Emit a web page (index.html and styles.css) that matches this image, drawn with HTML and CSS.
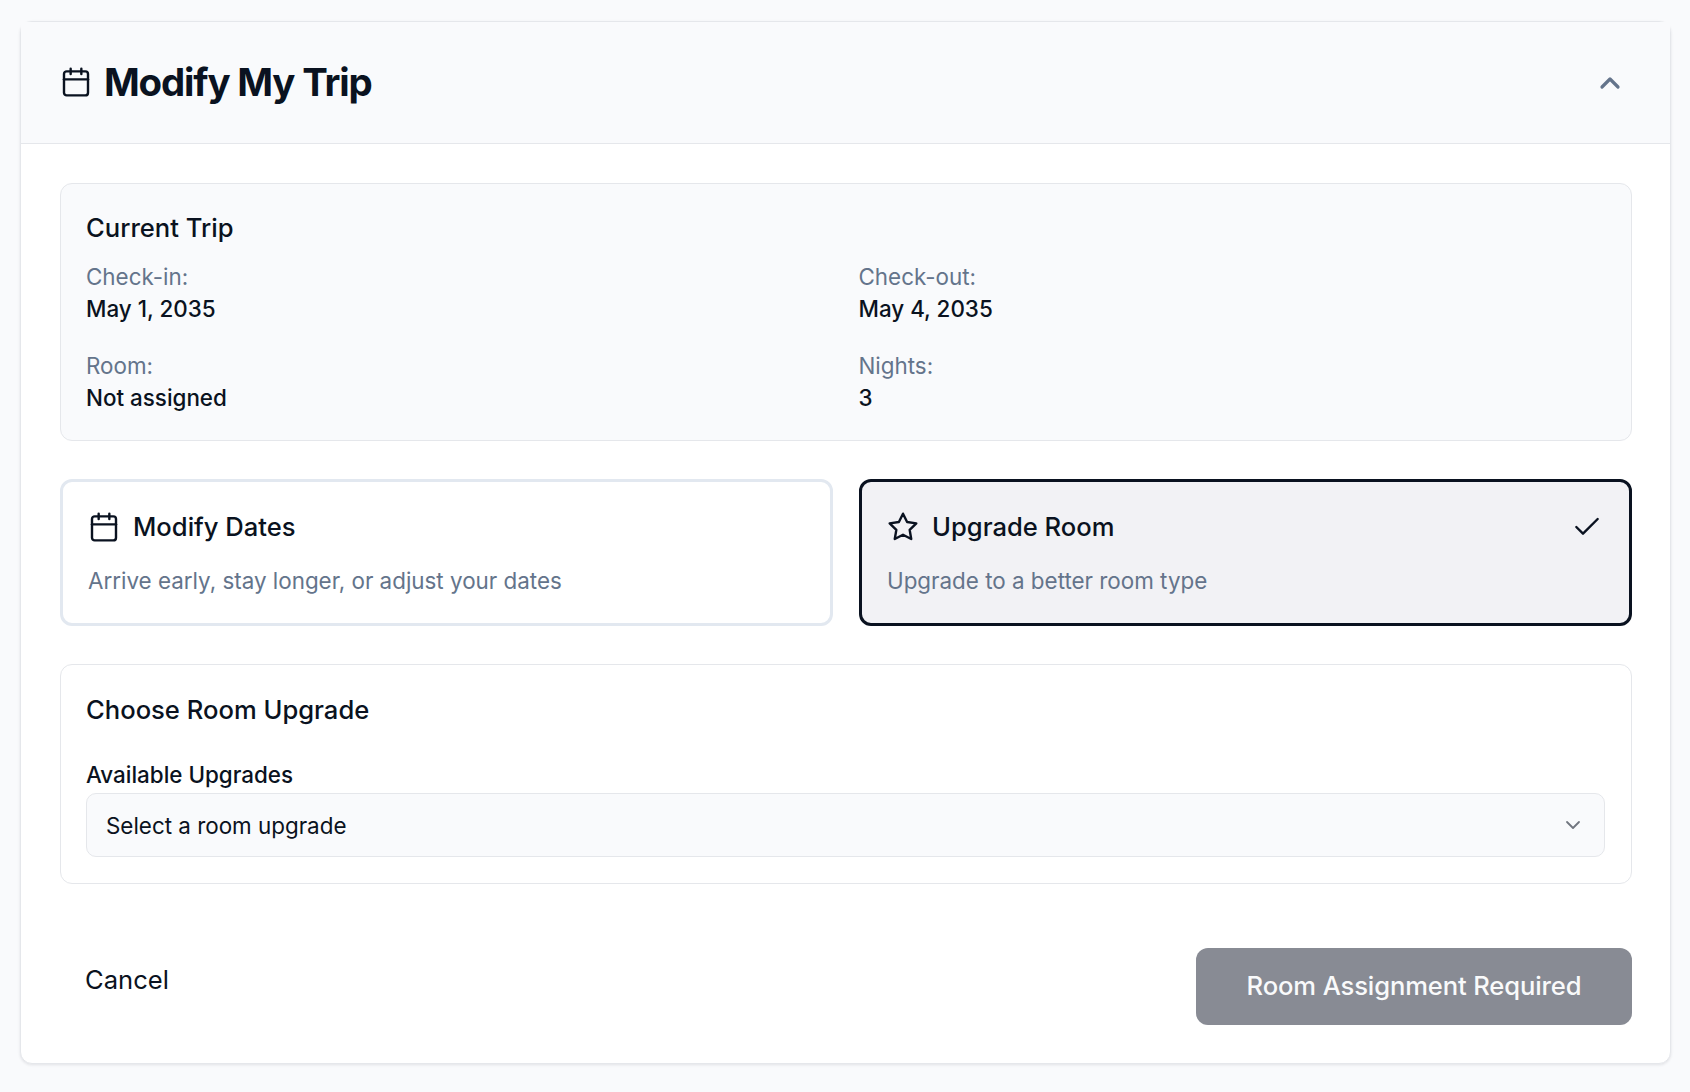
FILE: index.html
```html
<!DOCTYPE html>
<html lang="en">
<head>
<meta charset="utf-8">
<title>Modify My Trip</title>
<link rel="stylesheet" href="styles.css">
</head>
<body>
<main class="card">
  <header class="card-head">
    <div class="head-title">
      <svg class="icon" viewBox="0 0 24 24"><path d="M8 2v4"/><path d="M16 2v4"/><rect x="3" y="4" width="18" height="18" rx="2"/><path d="M3 10h18"/></svg>
      <h1>Modify My Trip</h1>
    </div>
    <svg class="icon chev-up" viewBox="0 0 24 24"><path d="m18 15-6-6-6 6"/></svg>
  </header>
  <div class="card-body">
    <section class="trip">
      <h2>Current Trip</h2>
      <div class="trip-grid">
        <div><div class="lbl">Check-in:</div><div class="val">May 1, 2035</div></div>
        <div><div class="lbl">Check-out:</div><div class="val">May 4, 2035</div></div>
        <div><div class="lbl">Room:</div><div class="val">Not assigned</div></div>
        <div><div class="lbl">Nights:</div><div class="val">3</div></div>
      </div>
    </section>
    <div class="options">
      <div class="opt">
        <div class="opt-head">
          <svg class="icon" viewBox="0 0 24 24"><path d="M8 2v4"/><path d="M16 2v4"/><rect x="3" y="4" width="18" height="18" rx="2"/><path d="M3 10h18"/></svg>
          <h3>Modify Dates</h3>
        </div>
        <p>Arrive early, stay longer, or adjust your dates</p>
      </div>
      <div class="opt opt-on">
        <div class="opt-head">
          <svg class="icon" viewBox="0 0 24 24"><path d="M12 2l3.09 6.26L22 9.27l-5 4.87 1.18 6.88L12 17.77l-6.18 3.25L7 14.14 2 9.27l6.91-1.01L12 2z"/></svg>
          <h3>Upgrade Room</h3>
          <svg class="icon check" viewBox="0 0 24 24"><path d="M20 6 9 17l-5-5"/></svg>
        </div>
        <p>Upgrade to a better room type</p>
      </div>
    </div>
    <section class="choose">
      <h2>Choose Room Upgrade</h2>
      <label class="field-label" for="upgrade">Available Upgrades</label>
      <div class="select-wrap">
        <select id="upgrade" class="select"><option>Select a room upgrade</option></select>
        <svg class="icon chev-down" viewBox="0 0 24 24"><path d="m6 9 6 6 6-6"/></svg>
      </div>
    </section>
    <footer class="actions">
      <button class="cancel" type="button">Cancel</button>
      <button class="submit" type="button">Room Assignment Required</button>
    </footer>
  </div>
</main>
</body>
</html>
```
FILE: styles.css
```css
* { box-sizing: border-box; }
html, body { margin: 0; height: 100%; }
body {
  background: #f9fafc;
  color: #0a1220;
  font-family: Inter, "Liberation Sans", sans-serif;
  padding: 21px 19px 0 20px;
}
h1, h2, h3, p { margin: 0; }
.icon {
  width: 32px; height: 32px; flex: none;
  fill: none; stroke: currentColor; stroke-width: 1.8;
  stroke-linecap: round; stroke-linejoin: round;
}
.card {
  background: #fff;
  border: 1px solid #e5e7eb;
  border-radius: 12px;
  box-shadow: 0 1px 3px rgba(15, 23, 42, .1);
  height: 1043px;
}
.card-head {
  display: flex; align-items: center; justify-content: space-between;
  background: #f9fafc;
  border-bottom: 1px solid #e5e7eb;
  height: 122px;
  padding: 0 44px 0 39px;
}
.head-title { display: flex; align-items: center; gap: 12px; }
h1 { font-size: 38.4px; font-weight: 700; line-height: 1.2; letter-spacing: -1.15px; }
.chev-up { color: #64748b; stroke-width: 2.4; }
.card-body { padding: 39px 38px 0 39px; display: flex; flex-direction: column; }
h2 { font-size: 25.6px; font-weight: 500; line-height: 36px; }
.trip {
  background: #f9fafc;
  border: 1px solid #e5e7eb;
  border-radius: 12px;
  height: 258px;
  padding: 26px 25px;
}
.trip-grid { display: grid; grid-template-columns: 1fr 1fr; gap: 25px; margin-top: 15px; }
.lbl { font-size: 22.4px; line-height: 32px; color: #64748b; }
.val { font-size: 22.4px; line-height: 32px; font-weight: 500; }
.options { display: grid; grid-template-columns: 1fr 1fr; gap: 26px; margin-top: 38px; }
.opt {
  border: 3px solid #e2e8f0;
  border-radius: 12px;
  height: 147px;
  padding: 29px 25px 0;
}
.opt-on { background: #f2f2f5; border-color: #0a1220; }
.opt-head { display: flex; align-items: center; gap: 13px; height: 32px; }
.opt h3 { font-size: 25.6px; font-weight: 500; line-height: 36px; }
.opt p { margin-top: 22px; font-size: 22.4px; line-height: 32px; color: #64748b; }
.check { margin-left: auto; margin-right: 1px; }
.choose {
  border: 1px solid #e5e7eb;
  border-radius: 12px;
  height: 220px;
  margin-top: 38px;
  padding: 27px 26px 0 25px;
}
.field-label { display: block; margin-top: 31px; font-size: 22.4px; font-weight: 500; line-height: 32px; }
.select-wrap { position: relative; margin-top: 2px; }
.select {
  appearance: none;
  display: block;
  width: 100%; height: 64px;
  background: #f9fafc;
  border: 1px solid #e5e7eb;
  border-radius: 10px;
  color: #0a1220;
  font: 400 22.4px Inter, "Liberation Sans", sans-serif;
  padding: 0 19px;
}
.chev-down {
  position: absolute; right: 20px; top: 20px;
  width: 24px; height: 24px; color: #71767f;
  pointer-events: none;
}
.actions { display: flex; justify-content: space-between; align-items: flex-start; margin-top: 64px; }
.cancel {
  background: none; border: 0; padding: 0 25px;
  height: 62px;
  color: #0a1220;
  font: 400 25.6px Inter, "Liberation Sans", sans-serif;
}
.submit {
  width: 436px; height: 77px;
  background: #888b94;
  border: 0; border-radius: 12px;
  padding: 0 0 2px;
  color: #f9fafb;
  font: 500 25.6px Inter, "Liberation Sans", sans-serif;
  letter-spacing: -.13px;
}
```
